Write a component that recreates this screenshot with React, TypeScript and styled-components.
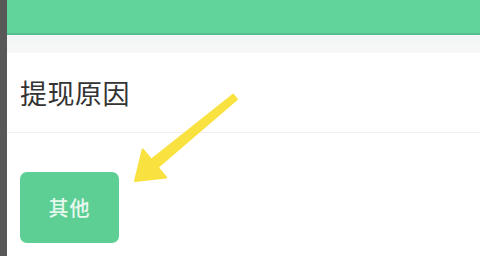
import React from "react";
import styled, { createGlobalStyle } from "styled-components";

const GlobalStyle = createGlobalStyle`
  html, body {
    margin: 0;
    padding: 0;
    background: #ffffff;
  }
  body {
    font-family: "Noto Sans CJK SC", "Noto Sans", sans-serif;
  }
`;

const Screen = styled.div`
  position: relative;
  width: 480px;
  height: 256px;
  display: flex;
  overflow: hidden;
  background: #ffffff;
`;

const SideStrip = styled.div`
  width: 7px;
  flex-shrink: 0;
  background: #585858;
`;

const Main = styled.div`
  flex: 1;
  display: flex;
  flex-direction: column;
`;

const Header = styled.div`
  height: 33px;
  background: #61d49b;
  border-bottom: 2px solid #57bf8c;
`;

const Band = styled.div`
  height: 18px;
  background: linear-gradient(#f3f6f6, #f7f7f8);
`;

const SectionTitle = styled.div`
  height: 79px;
  display: flex;
  align-items: center;
  padding-left: 13px;
  border-bottom: 1px solid #f0f0f0;
  font-size: 27px;
  color: #333333;
  letter-spacing: 0.5px;
`;

const Options = styled.div`
  display: flex;
  gap: 12px;
  padding: 39px 0 0 13px;
`;

const OptionButton = styled.button<{ $active?: boolean }>`
  width: 99px;
  height: 71px;
  border: none;
  border-radius: 7px;
  background: ${(p) => (p.$active ? "#5dcf95" : "#f2f2f2")};
  color: ${(p) => (p.$active ? "#e8f8ef" : "#333")};
  font-family: "Noto Sans CJK SC", "Noto Sans", sans-serif;
  font-size: 20px;
  font-weight: 500;
  letter-spacing: 1px;
  padding: 0;
`;

const Pointer = styled.svg`
  position: absolute;
  left: 0;
  top: 0;
  pointer-events: none;
`;

const App: React.FC = () => {
  return (
    <>
      <GlobalStyle />
      <Screen>
        <SideStrip />
        <Main>
          <Header />
          <Band />
          <SectionTitle>提现原因</SectionTitle>
          <Options>
            <OptionButton $active>其他</OptionButton>
          </Options>
        </Main>
        <Pointer width="480" height="256" viewBox="0 0 480 256">
          <polygon
            points="135,181 142.7,149.4 151.3,159.7 233.1,94.7 236.9,99.3 157.7,167.3 166.3,177.6"
            fill="#f9e23f"
            stroke="#f9e23f"
            strokeWidth="2"
            strokeLinejoin="round"
          />
        </Pointer>
      </Screen>
    </>
  );
};

export default App;
